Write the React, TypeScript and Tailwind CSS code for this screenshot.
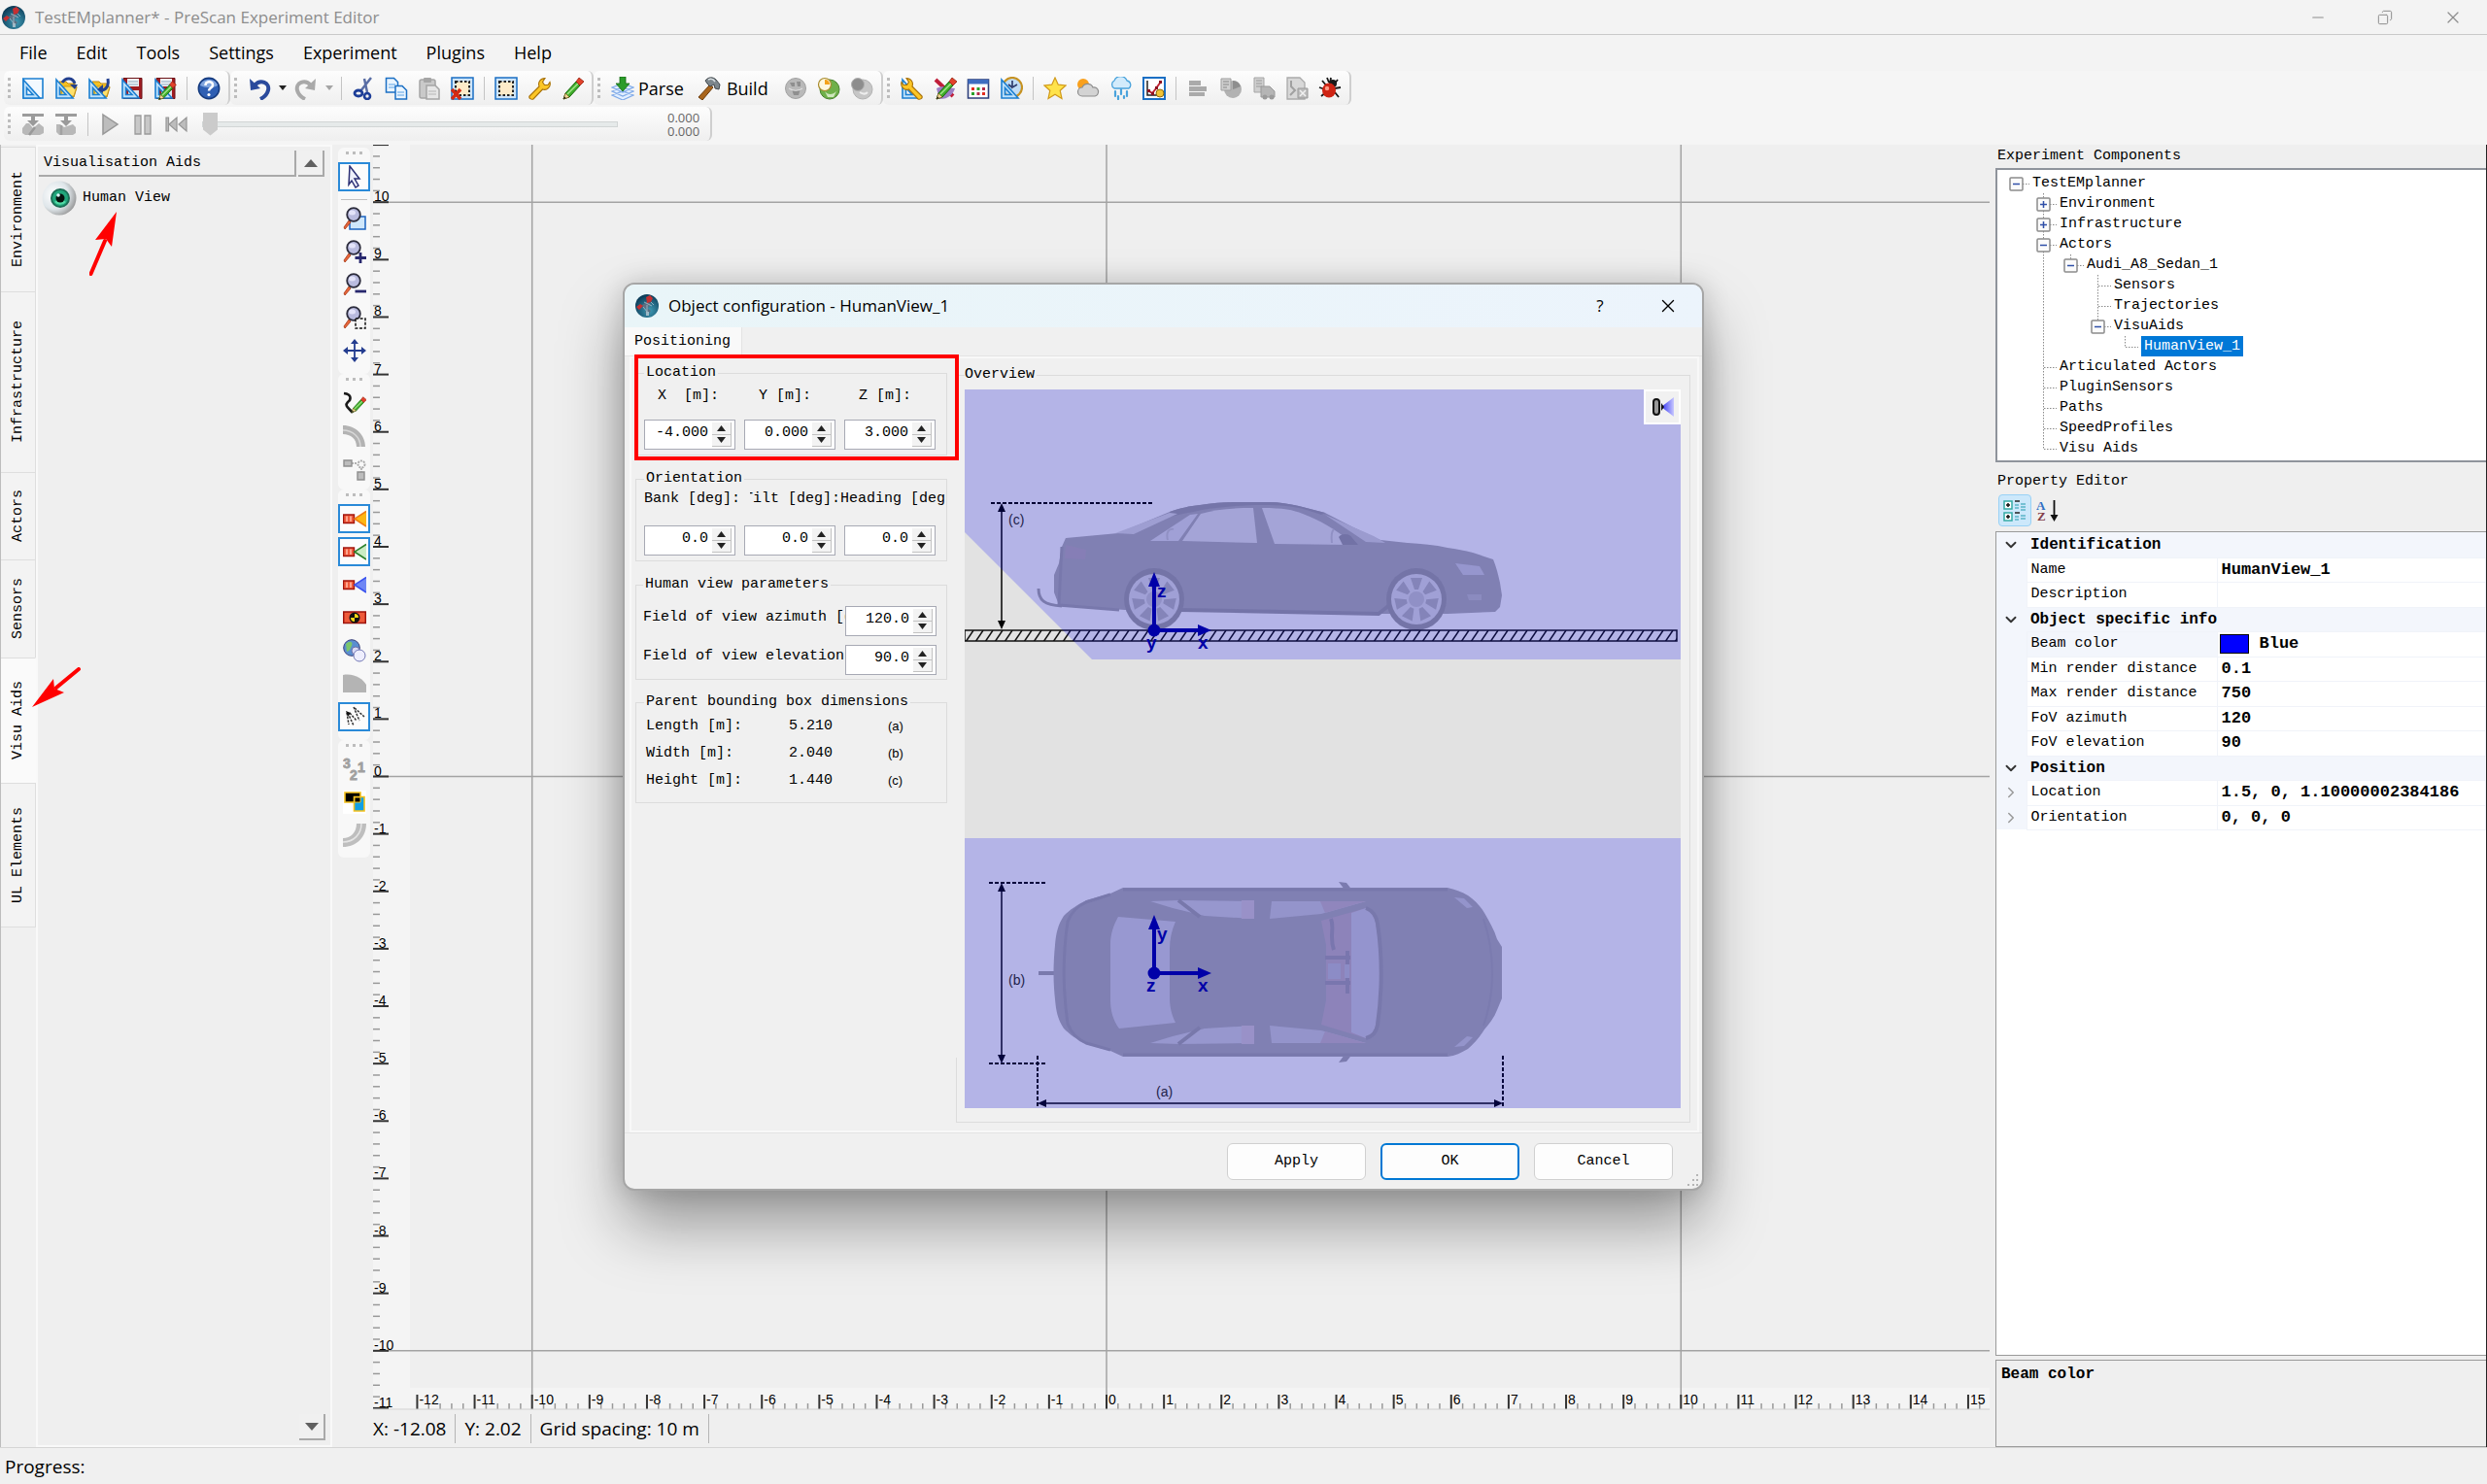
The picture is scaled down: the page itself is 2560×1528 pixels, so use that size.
import React from 'react';
import { ChevronDown, ChevronRight, Copy, Minus, X } from 'lucide-react';

const mono = "font-['Liberation_Mono',monospace] text-[15px] leading-[18px]";

type IconProps = { children: React.ReactNode; size?: string };

function Icon({ children, size = 'h-6 w-6' }: IconProps) {
  return (
    <svg viewBox="0 0 24 24" className={`${size} shrink-0`} fill="none" aria-hidden="true">
      {children}
    </svg>
  );
}

/* ---------- shared icon parts ---------- */

function Logo() {
  return (
    <Icon>
      <defs>
        <radialGradient id="logo" cx="0.6" cy="0.7" r="0.7">
          <stop offset="0" stopColor="#3f9bb5" />
          <stop offset="1" stopColor="#0b3a56" />
        </radialGradient>
      </defs>
      <circle cx="12" cy="12" r="12" fill="url(#logo)" />
      <path d="M7 11l5-3 4 2-3 4-4 1z M12 14l4 3-3 4-3-2z" fill="#5b6f82" />
      <path d="M9 8l8 4M8 13l5 6M14 6l5 5M12 11v10" stroke="#a9c3cf" strokeWidth="0.800" />
      <path d="M11 3l4-2 3 3-2 4-4 1z M1 13l4-3 3 2-4 4z" fill="#c62f31" />
      <path d="M11 18h3v4h-3z" fill="#9fb9c6" />
    </Icon>
  );
}

const SetSquare = () => (
  <path d="M2 3v19h17zM5.500 11.500l6.500 7H5.500z" fill="#bfe2fb" stroke="#1b7fd1" strokeWidth="1.600" fillRule="evenodd" />
);

const Folder = () => (
  <>
    <path d="M5 5h7l2 2h7v4l2 0-3 10H6z" fill="#f5c021" stroke="#c08a10" strokeWidth="1" />
    <path d="M6 20L10 10h13l-3 10z" fill="#ffe06a" stroke="#c08a10" strokeWidth="0.800" />
  </>
);

const Disk = () => (
  <>
    <path d="M3 1.500h19v21H3z" fill="#a01c22" stroke="#6d1216" />
    <path d="M7 2h12v8H7z" fill="#eef3f8" />
    <path d="M8 5h10M8 8h10" stroke="#8fa7bd" />
    <path d="M8 14h11v8H8z" fill="#dfe6ec" />
  </>
);

const Pencil = () => (
  <>
    <path d="M5 17L16 5l4 4L9 21l-6 2z" fill="#3fae2a" stroke="#17670e" strokeWidth="1" />
    <path d="M7 18L18 7" stroke="#a5e58c" strokeWidth="1.500" />
    <path d="M3 23l2-6 4 4z" fill="#f3d59a" stroke="#7b5a1c" strokeWidth="0.700" />
    <path d="M3 23l1-2.500 1.500 1.500z" fill="#111" />
    <path d="M16 5l3-4 5 4-4 4z" fill="#e2412b" stroke="#93220f" strokeWidth="0.800" />
  </>
);

const Wrench = () => (
  <path
    d="M2 20L12 10C10.500 6 13 1.500 18 1.500L15.500 5.500l2 3h3.500l2-3c1.500 5-3 9-7.500 7.500L6 23c-2 1-5-1-4-3z"
    fill="#fcc626"
    stroke="#a8720a"
    strokeWidth="1.100"
  />
);

const Lens = () => (
  <>
    <path d="M1 21l5-7 2 2-6 7z" fill="#e8663a" stroke="#a53312" strokeWidth="0.800" />
    <circle cx="11" cy="8" r="6.800" fill="#b9bbdf" stroke="#2c2c3c" strokeWidth="1.800" />
    <ellipse cx="9.500" cy="6" rx="3.500" ry="2.500" fill="#eef" opacity="0.800" />
  </>
);

const GreyGlobe = () => (
  <>
    <circle cx="12" cy="12" r="10.500" fill="#b9b9b9" stroke="#a2a2a2" />
    <path d="M6 6h5v4H8zM13 5h4v5h-3zM8 13c3 2 6 2 9-1l-2 7h-5z" fill="#8f8f8f" />
    <path d="M5 12c4 3 10 3 14 0" stroke="#dedede" strokeWidth="1.200" />
  </>
);

const Sensor = ({ fan, edge }: { fan: string; edge: string }) => (
  <>
    <path d="M0.500 8h11v8.500h-11z" fill="#ef5b3c" stroke="#a3160e" strokeWidth="1.400" />
    <path d="M3 9.500h2v5.500H3zM7 9.500h2v5.500H7z" fill="#ffa58e" />
    <path d="M12 12.200L24 4.500v15.500z" fill={fan} />
    <path d="M24 4.500L12 12.200 24 20" stroke={edge} strokeWidth="1.600" />
  </>
);

const icons = {
  newFile: <><path d="M2 2h20v20H2z" fill="#f2f9ff" stroke="#1b7fd1" strokeWidth="1.600" /><SetSquare /></>,
  open: <><Folder /><SetSquare /><path d="M8 6c4-6 11-5 13 1" stroke="#23408f" strokeWidth="3" /><path d="M16 8h8l-3 5z" fill="#23408f" /></>,
  openFrom: <><Folder /><SetSquare /><path d="M15 14c6-1 7-7 6-12" stroke="#23408f" strokeWidth="3" /><path d="M10 13l6-5v9z" fill="#23408f" /></>,
  save: <><Disk /><SetSquare /></>,
  saveAs: <><Disk /><SetSquare /><g transform="translate(3 4) scale(.85)"><Pencil /></g></>,
  help: <><circle cx="12" cy="12" r="10.700" fill="#2f5fb3" stroke="#153a7d" strokeWidth="1.500" /><path d="M3 9c2-8 16-8 18 0-5 3-12 3-18 0z" fill="#7fa4dd" /><path d="M8.500 9c0-5 7.500-5 7.500-.5 0 3-4 3-4 6" stroke="#fff" strokeWidth="2.500" /><circle cx="12" cy="18.500" r="1.600" fill="#fff" /></>,
  undo: <><path d="M7 9c6-7 16-3 14 5-1 4-4 7-8 9" stroke="#2a4a9c" strokeWidth="4" /><path d="M2 2l1 12 10-2z" fill="#2a4a9c" /></>,
  redo: <><path d="M17 9C11 2 1 6 3 14c1 4 4 7 8 9" stroke="#a9a9a9" strokeWidth="4" /><path d="M22 2l-1 12-10-2z" fill="#a9a9a9" /></>,
  cut: <><path d="M20 1L9 15M13 2l3 14" stroke="#5a6ea5" strokeWidth="2.500" /><ellipse cx="7" cy="17" rx="4" ry="3" stroke="#1d3e98" strokeWidth="2.800" /><ellipse cx="16" cy="20" rx="3" ry="3" stroke="#1d3e98" strokeWidth="2.600" /></>,
  copy: <><path d="M1.500 1.500h8l4 4V16h-12z" fill="#eaf5ff" stroke="#1b6fc4" strokeWidth="1.500" /><path d="M4 8h7M4 11h7" stroke="#5aa2e4" /><path d="M11 9.500h7l4.500 4.500v9H11z" fill="#eaf5ff" stroke="#1b6fc4" strokeWidth="1.500" /><path d="M13 16h7M13 19h7" stroke="#5aa2e4" /></>,
  paste: <><rect x="2" y="3" width="16" height="19" rx="2" fill="#c9c9c9" stroke="#a5a5a5" strokeWidth="1.500" /><rect x="6" y="1" width="8" height="5" rx="1" fill="#a5a5a5" /><path d="M9 9h9l4 4v10H9z" fill="#e6e6e6" stroke="#a5a5a5" strokeWidth="1.500" /><path d="M11 15h8M11 18h8" stroke="#b5b5b5" /></>,
  erase: <><path d="M1 1h22v22H1z" fill="#cfe5f8" stroke="#1b6fc4" strokeWidth="1.500" /><path d="M5 5h14v14H5z" fill="#fdebc9" stroke="#222" strokeWidth="2" strokeDasharray="2.500 2" /><path d="M1 13l9 10M10 13L1 23" stroke="#d42a14" strokeWidth="3.500" /></>,
  select: <><path d="M1 1h22v22H1z" fill="#cfe5f8" stroke="#1b6fc4" strokeWidth="1.500" /><path d="M5 5h14v14H5z" fill="#fdebc9" stroke="#222" strokeWidth="2" strokeDasharray="2.500 2" /></>,
  wrench: <Wrench />,
  pencil: <Pencil />,
  parse: <><path d="M1 19l11-4 11 4-11 5zM1 15l11-4 11 4-11 5zM1 11l11-4 11 4-11 5z" fill="#e3efff" stroke="#7ea9e8" strokeWidth="1.200" /><path d="M9 0h6v7h4l-7 8-7-8h4z" fill="#2c9c2b" stroke="#12670f" strokeWidth="0.800" /></>,
  build: <><path d="M1 21L13 8l3 3L5 24z" fill="#a9651c" stroke="#6b3c0c" /><path d="M8 4c3-4 8-4 11-1l4 5-1 5-4-1-1-4-4 2-3-3z" fill="#7c868c" stroke="#42494e" /><path d="M11 3c2-1 5-1 7 2" stroke="#dbe1e4" strokeWidth="1.500" /></>,
  globe: <GreyGlobe />,
  run: <><circle cx="13" cy="13" r="10" fill="#6fb04a" stroke="#4a8230" /><path d="M8 15c3 4 8 4 12 0l-3 6h-6z" fill="#cfe6bd" /><circle cx="8" cy="8" r="6.500" fill="#fdf7df" stroke="#a88a2a" strokeWidth="1.200" /><path d="M8 8V3c3 0 5 2 5 5z" fill="#f4a21c" /></>,
  runGrey: <><circle cx="13" cy="13" r="10" fill="#c6c6c6" stroke="#b3b3b3" /><circle cx="8" cy="8" r="6.500" fill="#8d8d8d" stroke="#b0b0b0" /><path d="M10 16c3 2 6 2 8 0" stroke="#eee" strokeWidth="2" /></>,
  settings: <><SetSquare /><g transform="translate(24 0) scale(-1 1)"><Wrench /></g></>,
  paint: <><path d="M2 3l18 17" stroke="#c01f3a" strokeWidth="4" /><path d="M3 12c6-4 14 0 19 0-2 6-6 11-16 11z" fill="#9c7fc4" /><Pencil /></>,
  grid: <><path d="M1.500 3h21v19h-21z" fill="#fff" stroke="#2c3e7a" strokeWidth="1.600" /><path d="M1.500 3h21v4.500h-21z" fill="#3f6cc0" /><path d="M5 11h3v3H5zM16 16h3v3h-3z" fill="#e32d1e" /><path d="M10.500 11h3v3h-3zM5 16h3v3H5z" fill="#2aa02a" /><path d="M16 11h3v3h-3zM10.500 16h3v3h-3z" fill="#b42a48" /></>,
  clock: <><circle cx="13" cy="11" r="10" fill="#bfdcf5" stroke="#c69222" strokeWidth="2.200" /><path d="M13 4v7l5-3M9 8l4 3" stroke="#2f3e6e" strokeWidth="1.700" /><SetSquare /></>,
  star: <path d="M12 1l3.300 7.200 7.700.8-5.800 5.200L19 22.500 12 18.300 5 22.500l1.800-8.300L1 9l7.700-.8z" fill="#ffe34a" stroke="#d19a1a" strokeWidth="1.200" />,
  cloud: <><circle cx="7" cy="8" r="6" fill="#f9a01c" /><path d="M6 20a4.500 4.500 0 010-9 6 6 0 0111 0 4.500 4.500 0 012 9z" fill="#d3d3d3" stroke="#8d8d8d" strokeWidth="1.200" /></>,
  rain: <><path d="M5 12a4.500 4.500 0 010-8 7 7 0 0113 0 4.500 4.500 0 012 8z" fill="#d3ebfb" stroke="#4aa3dc" strokeWidth="1.300" /><path d="M6 15v5M12 13v5M18 15v5M9 20v3M15 20v2" stroke="#4aa3dc" strokeWidth="2.200" strokeLinecap="round" /></>,
  chart: <><path d="M1 1h22v22H1z" fill="#fff" stroke="#1b6fc4" strokeWidth="2" /><path d="M5 4v15h15" stroke="#222" strokeWidth="1.500" /><path d="M6 14l4 3 4-5 5-7" stroke="#c22333" strokeWidth="2" /><path d="M5 13h3v3H5zM9 16h3v3H9zM13 10h3v3h-3zM17 4h3v3h-3z" fill="#8e1220" /><circle cx="18" cy="17" r="4" fill="#f2c335" stroke="#8d6a10" /></>,
  bars: <path d="M3 4h12v5H3zM3 10h18v5H3zM3 16h16v4H3z" fill="#aaa" />,
  pie: <><circle cx="14" cy="13" r="9" fill="#b2b2b2" /><path d="M14 13V4a9 9 0 018 6z" fill="#8e8e8e" /><path d="M2 2h10v12H2z" fill="#cfcfcf" stroke="#9f9f9f" /><path d="M4 5h6M4 8h6M4 11h4" stroke="#888" /></>,
  truck: <><path d="M2 1h10v15H2z" fill="#cfcfcf" stroke="#a5a5a5" /><path d="M4 4h6M4 7h6M4 10h6" stroke="#999" /><path d="M9 10h9l5 5v6H9z" fill="#b5b5b5" stroke="#999" /><circle cx="13" cy="21" r="2.500" fill="#9a9a9a" /><circle cx="20" cy="21" r="2.500" fill="#9a9a9a" /></>,
  report: <><path d="M2 1h13l5 5v17H2z" fill="#d8d8d8" stroke="#aaa" strokeWidth="1.300" /><path d="M6 4v6l4 4-5 5" stroke="#a0a0a0" strokeWidth="2" /><path d="M13 12h10v10H13z" fill="#bcbcbc" stroke="#999" /><path d="M15 14l6 6M21 14l-6 6" stroke="#f1f1f1" strokeWidth="1.500" /></>,
  bug: <><path d="M4 4l5 6M20 3l-4 5M1 11l6 2M23 11l-6 1M3 20l5-4M21 21l-4-5M13 1l-1 6M9 1l2 5" stroke="#1a1a1a" strokeWidth="1.800" /><circle cx="15" cy="7" r="4" fill="#1a1a1a" /><ellipse cx="11" cy="14" rx="7" ry="7.500" fill="#cf2414" /><circle cx="9" cy="12" r="2.200" fill="#ff9a86" /></>,
  car: <><path d="M1 1h22v3H1z" fill="#9c9c9c" /><path d="M1 16l4-5h3l4 5 6-5 5 4v6l-4 2H4l-3-2z" fill="#b8b8b8" /><path d="M8 23l6-8" stroke="#999" strokeWidth="2.500" /><path d="M10 4h4v4h4l-6 6-6-6h4z" fill="#9a9a9a" /></>,
  box: <><path d="M1 1h22v3H1z" fill="#9c9c9c" /><path d="M2 12h4l4 3 9-3 3 3v6l-3 2H5l-3-3z" fill="#b8b8b8" /><path d="M7 13v10" stroke="#a2a2a2" strokeWidth="2.500" /><path d="M10 4h4v4h4l-6 6-6-6h4z" fill="#9a9a9a" /></>,
  play: <path d="M5 2l15 10L5 22z" fill="#bdbdbd" stroke="#979797" strokeWidth="1.500" />,
  pause: <path d="M4 3h6v19H4zM14 3h6v19h-6z" fill="#c8c8c8" stroke="#9b9b9b" strokeWidth="1.300" />,
  rewind: <path d="M2 5h2.500v14H2zM13 5v14L5 12zM23 5v14l-8-7z" fill="#bdbdbd" stroke="#979797" strokeWidth="1.200" />,
  pointer: <path d="M7 1l10 13h-5l4 7-3 2-4-7-3 4z" fill="#eef0fb" stroke="#2b2f74" strokeWidth="1.500" />,
  zoomWindow: <><path d="M7 10h16v13H7z" fill="#cfe7fb" stroke="#1b63c0" strokeWidth="1.500" /><Lens /></>,
  zoomIn: <><Lens /><path d="M18 13v11M12.500 18.500H24" stroke="#28286e" strokeWidth="2.800" /></>,
  zoomOut: <><Lens /><path d="M12.500 19H24" stroke="#28286e" strokeWidth="2.800" /></>,
  zoomFit: <><Lens /><path d="M13 13h10v10H13z" fill="#f6f6f6" stroke="#111" strokeWidth="1.500" strokeDasharray="3 1.600" /></>,
  move: <><path d="M12 3v18M3 12h18" stroke="#233c8f" strokeWidth="1.800" /><path d="M12 0l4 5H8zM12 24l4-5H8zM0 12l5-4v8zM24 12l-5-4v8z" fill="#233c8f" /></>,
  sketch: <><path d="M1 2c9 1 7 7 4 9-4 4 1 6 5 11" stroke="#1a1a1a" strokeWidth="2.600" /><g transform="translate(7 5) scale(.72)"><Pencil /></g></>,
  bend: <><path d="M0 1c13 0 23 10 23 22h-9c0-8-6-13-14-13z" fill="#b3b3b3" /><path d="M0 6c10 0 18 7 18 17" stroke="#d8d8d8" strokeWidth="1.500" /></>,
  nodes: <><path d="M1 3h8v6H1zM15 15h7v8h-7z" fill="#bdbdbd" stroke="#8f8f8f" strokeWidth="1.400" /><path d="M9 6h6M19 11v4" stroke="#999" strokeDasharray="2 1" strokeWidth="1.300" /><circle cx="19" cy="7" r="3.500" stroke="#aaa" strokeWidth="2" strokeDasharray="2 1" /></>,
  sensorOrange: <Sensor fan="#fdb714" edge="#f07c12" />,
  sensorGreen: <Sensor fan="#c9ecc4" edge="#2a7f2a" />,
  sensorBlue: <Sensor fan="#6f87f5" edge="#3a52ee" />,
  crash: <><path d="M0.700 6h22.600v11.500H0.700z" fill="#ee5a3a" stroke="#9c130c" strokeWidth="1.500" /><circle cx="12" cy="12" r="5.500" fill="#111" /><path d="M12 12V8a4 4 0 014 4zM12 12v4a4 4 0 01-4-4z" fill="#f5d813" /></>,
  world: <><circle cx="9" cy="9" r="8.300" fill="#5a8fd0" stroke="#3a3f7a" /><path d="M3 5c4-4 8-2 6 2s-2 5-5 6z" fill="#7cc66a" /><circle cx="13" cy="12" r="4" fill="#d9dbf6" stroke="#6a6fa8" /><circle cx="17" cy="17" r="6" fill="#eeeefe" stroke="#7277b5" /></>,
  terrain: <path d="M0 3c12-2 20 4 24 10v8H0z" fill="#b4b4b4" />,
  lanes: <><path d="M5 8l6 13M4 8l2 12M11 2l6 14M12 3l10 9M7 8l7 8" stroke="#333" strokeWidth="1.500" strokeDasharray="2.500 1.200" /><path d="M3 6l5 2-3 4z" fill="#111" /></>,
  numbers: <g fill="#a0a0a0" stroke="#a0a0a0" strokeWidth="0.800" className="font-['Liberation_Sans',sans-serif] text-[14px] font-bold"><text x="0" y="11">3</text><text x="7" y="23">2</text><text x="15" y="15">1</text></g>,
  layers: <><path d="M0 0h24v24H0z" fill="#fff" /><path d="M2 2h16v10H2z" fill="#000" stroke="#f4c01c" strokeWidth="1.600" /><path d="M11.500 6.500h10.500V21H11.500z" fill="#12a0e4" stroke="#f4c01c" strokeWidth="1.600" /><path d="M12 7h6v5h-6z" fill="#000" stroke="#f4c01c" strokeWidth="1" /></>,
  curve: <><path d="M24 0c0 14-10 24-24 24v-9C8 15 14 9 14 0z" fill="#bebebe" /><path d="M19 0c0 11-8 19-19 19" stroke="#e5e5e5" strokeWidth="1.500" /></>,
};

type IconName = keyof typeof icons;

/* ---------- horizontal toolbars ---------- */

function ToolButton({ name }: { name: IconName }) {
  return (
    <button className="flex h-[34px] w-[34px] items-center justify-center" aria-label={name}>
      <Icon>{icons[name]}</Icon>
    </button>
  );
}

function Grip() {
  return (
    <span className="mr-[5px] flex w-[4px] flex-col gap-[3px]">
      {[0, 1, 2, 3].map((i) => (
        <span key={i} className="h-[3px] w-[3px] bg-[#bdbdbd]" />
      ))}
    </span>
  );
}

const Divider = () => <span className="mx-[5px] h-6 w-px bg-[#c4c4c4]" />;

function Caret({ color }: { color: string }) {
  return (
    <button className="flex h-[34px] w-[14px] items-center justify-center" aria-label="More">
      <svg viewBox="0 0 8 5" className="h-[5px] w-[8px]" aria-hidden="true">
        <path d="M0 0h8L4 5z" fill={color} />
      </svg>
    </button>
  );
}

function ToolGroup({ children }: { children: React.ReactNode }) {
  return (
    <div className="flex h-[35px] items-center rounded-md border-r-2 border-[#cfcfcf] bg-linear-to-b from-[#fdfdfd] to-[#efefef] pr-[3px] pl-[4px]">
      <Grip />
      {children}
    </div>
  );
}

function Toolbars() {
  return (
    <div className="flex flex-col gap-[2px] bg-[#f5f5f5] pb-[4px] pl-[4px] text-[18px]">
      <div className="flex">
        <ToolGroup>
          <ToolButton name="newFile" />
          <ToolButton name="open" />
          <ToolButton name="openFrom" />
          <ToolButton name="save" />
          <ToolButton name="saveAs" />
          <Divider />
          <ToolButton name="help" />
        </ToolGroup>
        <ToolGroup>
          <ToolButton name="undo" />
          <Caret color="#222" />
          <ToolButton name="redo" />
          <Caret color="#a5a5a5" />
          <Divider />
          <ToolButton name="cut" />
          <ToolButton name="copy" />
          <ToolButton name="paste" />
          <ToolButton name="erase" />
          <Divider />
          <ToolButton name="select" />
          <ToolButton name="wrench" />
          <ToolButton name="pencil" />
        </ToolGroup>
        <ToolGroup>
          <button className="flex items-center gap-[4px] px-[5px]">
            <Icon>{icons.parse}</Icon>Parse
          </button>
          <button className="flex items-center gap-[6px] pr-[11px] pl-[9px]">
            <Icon>{icons.build}</Icon>Build
          </button>
          <ToolButton name="globe" />
          <ToolButton name="run" />
          <ToolButton name="runGrey" />
        </ToolGroup>
        <ToolGroup>
          <ToolButton name="settings" />
          <ToolButton name="paint" />
          <ToolButton name="grid" />
          <ToolButton name="clock" />
          <Divider />
          <ToolButton name="star" />
          <ToolButton name="cloud" />
          <ToolButton name="rain" />
          <ToolButton name="chart" />
          <Divider />
          <ToolButton name="bars" />
          <ToolButton name="pie" />
          <ToolButton name="truck" />
          <ToolButton name="report" />
          <ToolButton name="bug" />
        </ToolGroup>
      </div>
      <div className="flex">
        <ToolGroup>
          <ToolButton name="car" />
          <ToolButton name="box" />
          <Divider />
          <ToolButton name="play" />
          <ToolButton name="pause" />
          <ToolButton name="rewind" />
          <input
            type="range"
            defaultValue={0}
            aria-label="Simulation time"
            className="ml-[10px] h-6 w-[428px] appearance-none bg-transparent [&::-webkit-slider-runnable-track]:h-[6px] [&::-webkit-slider-runnable-track]:border [&::-webkit-slider-runnable-track]:border-[#d2d6d6] [&::-webkit-slider-runnable-track]:bg-[#e6eaea] [&::-webkit-slider-thumb]:-mt-[10px] [&::-webkit-slider-thumb]:h-6 [&::-webkit-slider-thumb]:w-[15px] [&::-webkit-slider-thumb]:appearance-none [&::-webkit-slider-thumb]:bg-[#cbcbcb] [&::-webkit-slider-thumb]:[clip-path:polygon(0_0,100%_0,100%_75%,50%_100%,0_75%)]"
          />
          <span className="mr-[8px] ml-[51px] flex flex-col text-[13px] leading-[14px] text-[#666]">
            <span>0.000</span>
            <span>0.000</span>
          </span>
        </ToolGroup>
      </div>
    </div>
  );
}

/* ---------- left side ---------- */

const sideTabs = [
  { label: 'Environment', cls: 'h-[149px]' },
  { label: 'Infrastructure', cls: 'h-[186px]' },
  { label: 'Actors', cls: 'h-[90px]' },
  { label: 'Sensors', cls: 'h-[101px]' },
  { label: 'Visu Aids', cls: 'h-[129px]' },
  { label: 'UL Elements', cls: 'h-[148px]' },
];

function SideTabs() {
  return (
    <div role="tablist" aria-orientation="vertical" className={`flex w-[37px] shrink-0 flex-col border-l border-[#bdbdbd] pt-[2px] ${mono}`}>
      {sideTabs.map(({ label, cls }) => (
        <button
          key={label}
          role="tab"
          aria-selected={label === 'Visu Aids'}
          className={`flex items-center justify-center border-t border-r border-[#dedede] ${cls} ${
            label === 'Visu Aids' ? 'border-r-[#fafafa] bg-[#fafafa]' : 'bg-[#f3f3f3]'
          }`}
        >
          <span className="rotate-180 [writing-mode:vertical-rl]">{label}</span>
        </button>
      ))}
      <div className="border-t border-[#dedede]" />
    </div>
  );
}

function ScrollButton({ down }: { down?: boolean }) {
  return (
    <button
      aria-label={down ? 'Scroll down' : 'Scroll up'}
      className="flex h-[27px] w-[27px] items-center justify-center border-r-2 border-b-2 border-[#a9a9a9] bg-[#f0f0f0]"
    >
      <svg viewBox="0 0 14 8" className={`h-[8px] w-[14px] ${down ? 'rotate-180' : ''}`} aria-hidden="true">
        <path d="M0 8L7 0l7 8z" fill="#606060" />
      </svg>
    </button>
  );
}

function Library() {
  return (
    <div className={`flex w-[305px] shrink-0 flex-col justify-between border-2 border-[#f9f9f9] bg-[#efefef] pb-[5px] ${mono}`}>
      <div>
        <div className="flex gap-[2px] pt-[4px] pl-[1px]">
          <button className="h-[27px] w-[265px] border-r-2 border-b-2 border-[#a9a9a9] bg-[#f0f0f0] pl-[5px] text-left">Visualisation Aids</button>
          <ScrollButton />
        </div>
        <button className="mt-[4px] ml-[4px] flex items-center gap-[6px]">
          <svg viewBox="0 0 36 36" className="h-9 w-9" aria-hidden="true">
            <defs>
              <radialGradient id="ball" cx="0.35" cy="0.4" r="0.7">
                <stop offset="0" stopColor="#ffffff" />
                <stop offset="0.6" stopColor="#dfe6ea" />
                <stop offset="1" stopColor="#929292" />
              </radialGradient>
            </defs>
            <circle cx="18" cy="18" r="17.500" fill="url(#ball)" />
            <circle cx="19" cy="18" r="10" fill="#1d6f57" />
            <circle cx="19" cy="18" r="8" fill="#22a77c" />
            <path d="M13 22a8 8 0 0012 0l-6-4z" fill="#52dba6" />
            <circle cx="19" cy="18" r="4.500" fill="#06120e" />
            <circle cx="17" cy="15" r="1.800" fill="#dff" />
          </svg>
          Human View
        </button>
      </div>
      <div className="flex justify-end pr-[5px]">
        <ScrollButton down />
      </div>
    </div>
  );
}

type StripItem = IconName | 'rule';

const strips: { cls: string; items: StripItem[] }[] = [
  { cls: 'h-[233px]', items: ['pointer', 'rule', 'zoomWindow', 'zoomIn', 'zoomOut', 'zoomFit', 'move'] },
  { cls: 'h-[119px]', items: ['sketch', 'bend', 'nodes'] },
  { cls: 'h-[258px]', items: ['sensorOrange', 'sensorGreen', 'sensorBlue', 'crash', 'world', 'terrain', 'lanes'] },
  { cls: 'h-[121px]', items: ['numbers', 'layers', 'curve'] },
];

const pressed: StripItem[] = ['pointer', 'sensorOrange', 'sensorGreen', 'lanes'];

function CanvasTools() {
  return (
    <div className="w-[42px] shrink-0 bg-[#efefef] pt-[3px] pl-[6px]">
      {strips.map(({ cls, items }) => (
        <div key={items[0]} className={`flex w-[33px] flex-col gap-[4px] rounded-md bg-[#f8f8f8] ${cls}`}>
          <span className="flex h-[11px] items-center justify-center gap-[4px]">
            <span className="h-[3px] w-[3px] bg-[#bdbdbd]" />
            <span className="h-[3px] w-[3px] bg-[#bdbdbd]" />
            <span className="h-[3px] w-[3px] bg-[#bdbdbd]" />
          </span>
          {items.map((item) =>
            item === 'rule' ? (
              <span key={item} className="mx-[3px] mt-[4px] h-px shrink-0 bg-[#c0c0c0]" />
            ) : (
              <button
                key={item}
                aria-label={item}
                className={`flex h-[30px] shrink-0 items-center justify-center ${pressed.includes(item) ? 'border-2 border-[#2a8ad8] bg-[#fcfcfc]' : ''}`}
              >
                <Icon>{icons[item]}</Icon>
              </button>
            ),
          )}
        </div>
      ))}
    </div>
  );
}

/* ---------- drawing canvas ---------- */

const UNIT = 59.13;
const ORIGIN = { x: 755, y: 650.5 };

function Rulers() {
  const rows = Array.from({ length: 23 }, (_, i) => 11 - i);
  const cols = Array.from({ length: 28 }, (_, i) => i - 12);
  const sub = [0.2, 0.4, 0.6, 0.8];
  const px = (v: number) => ORIGIN.x + v * UNIT;
  const py = (v: number) => ORIGIN.y - v * UNIT;
  return (
    <svg className="min-h-0 w-full flex-1 bg-[#efefef] font-['Liberation_Sans',sans-serif] text-[14px]" aria-label="Experiment canvas">
      <rect width="38" height="100%" fill="#f4f4f4" />
      <rect y="1280" width="100%" height="22" fill="#f4f4f4" />
      {[-10, 0, 10].map((v) => (
        <g key={v} stroke="#a3a3a3" strokeWidth="1.500">
          <line x1={px(v)} x2={px(v)} y1="0" y2="1290" />
          <line x1="0" x2="100%" y1={py(v)} y2={py(v)} />
        </g>
      ))}
      {rows.map((v) => (
        <g key={v}>
          <line x1="0" x2="16" y1={py(v)} y2={py(v)} stroke="#333" strokeWidth="2" />
          {sub.map((s) => (
            <line key={s} x1="0" x2="7" y1={py(v - s)} y2={py(v - s)} stroke="#999" strokeWidth="1.500" />
          ))}
          <text x="1" y={py(v) - 1}>{v}</text>
        </g>
      ))}
      {cols.map((v) => (
        <g key={v}>
          <line x1={px(v)} x2={px(v)} y1="1287" y2="1302" stroke="#333" strokeWidth="2" />
          {sub.map((s) => (
            <line key={s} x1={px(v + s)} x2={px(v + s)} y1="1296" y2="1302" stroke="#999" strokeWidth="1.500" />
          ))}
          <text x={px(v) + 2} y="1297">{v}</text>
        </g>
      ))}
      <line x1="0" x2="100%" y1="1302" y2="1302" stroke="#d0d0d0" />
    </svg>
  );
}

function Workspace() {
  return (
    <div className="flex min-w-0 flex-1 flex-col bg-[#efefef] pr-[6px]">
      <div className="flex min-h-0 flex-1">
        <CanvasTools />
        <div className="flex min-w-0 flex-1 flex-col">
          <Rulers />
        </div>
      </div>
      <div className="flex h-[38px] shrink-0 items-center pl-[42px] text-[19px]">
        <span className="border-r border-[#b5b5b5] py-[3px] pr-[9px]">X: -12.08</span>
        <span className="border-r border-[#b5b5b5] px-[9px] py-[3px]">Y: 2.02</span>
        <span className="border-r border-[#b5b5b5] px-[9px] py-[3px]">Grid spacing: 10 m</span>
      </div>
    </div>
  );
}

/* ---------- right side ---------- */

// One letter per indent cell: ' ' empty, '|' passing line, 't' tee, 'l' corner,
// '+' and '-' boxes on a passing line, '_' open box that ends its line.
const tree = [
  { cells: '-', label: 'TestEMplanner' },
  { cells: ' +', label: 'Environment' },
  { cells: ' +', label: 'Infrastructure' },
  { cells: ' -', label: 'Actors' },
  { cells: ' |_', label: 'Audi_A8_Sedan_1' },
  { cells: ' | t', label: 'Sensors' },
  { cells: ' | t', label: 'Trajectories' },
  { cells: ' | _', label: 'VisuAids' },
  { cells: ' |  l', label: 'HumanView_1', selected: true },
  { cells: ' t', label: 'Articulated Actors' },
  { cells: ' t', label: 'PluginSensors' },
  { cells: ' t', label: 'Paths' },
  { cells: ' t', label: 'SpeedProfiles' },
  { cells: ' l', label: 'Visu Aids' },
];

function TreeCell({ kind, root }: { kind: string; root: boolean }) {
  const boxed = '+-_'.includes(kind);
  return (
    <svg viewBox="0 0 28 21" className="h-[21px] w-7 shrink-0" fill="none" aria-hidden="true">
      <g stroke="#8a8a8a" strokeDasharray="1.500 1.500">
        {kind !== ' ' && !root && <path d={kind === 'l' || kind === '_' ? 'M11.500 0V11' : 'M11.500 0V21'} />}
        {kind !== ' ' && kind !== '|' && <path d="M12 11.500H25" />}
      </g>
      {boxed && (
        <>
          <rect x="5" y="5" width="13" height="13" rx="1" fill="#fbfbfb" stroke="#8c8c8c" strokeWidth="1.500" />
          <path d={kind === '+' ? 'M8 11.500h7M11.500 8v7' : 'M8 11.500h7'} stroke="#3050a8" strokeWidth="1.500" />
        </>
      )}
    </svg>
  );
}

const properties: { head?: string; name?: string; value?: string; swatch?: boolean; more?: boolean }[] = [
  { head: 'Identification' },
  { name: 'Name', value: 'HumanView_1' },
  { name: 'Description', value: '' },
  { head: 'Object specific info' },
  { name: 'Beam color', value: 'Blue', swatch: true },
  { name: 'Min render distance', value: '0.1' },
  { name: 'Max render distance', value: '750' },
  { name: 'FoV azimuth', value: '120' },
  { name: 'FoV elevation', value: '90' },
  { head: 'Position' },
  { name: 'Location', value: '1.5, 0, 1.10000002384186', more: true },
  { name: 'Orientation', value: '0, 0, 0', more: true },
];

function PropertyGrid() {
  return (
    <table className="w-full table-fixed border-collapse">
      <colgroup>
        <col className="w-[31px]" />
        <col className="w-[196px]" />
        <col />
      </colgroup>
      <tbody>
        {properties.map((p) => (
          <tr key={p.head ?? p.name} className="odd:h-[26px] even:h-[25px]">
            <td className="bg-[#f3f6fc] p-0 pl-[6px]">
              {p.head && <ChevronDown size={18} strokeWidth={2.5} color="#333" />}
              {p.more && <ChevronRight size={18} strokeWidth={2} color="#999" />}
            </td>
            {p.head ? (
              <th colSpan={2} className="bg-[#f3f6fc] p-0 pl-[4px] text-left text-[16px] font-bold">
                {p.head}
              </th>
            ) : (
              <>
                <td className={`border border-[#f0f3f9] p-0 pl-[4px] ${p.swatch ? 'bg-[#f3f6fc]' : ''}`}>{p.name}</td>
                <td className="border border-[#f0f3f9] p-0 pl-[4px] text-[17px] font-bold whitespace-nowrap">
                  {p.swatch && <span className="mr-[11px] -ml-[2px] inline-block h-[20px] w-[30px] border border-black bg-[#0000ff] align-middle" />}
                  {p.value}
                </td>
              </>
            )}
          </tr>
        ))}
      </tbody>
    </table>
  );
}

function Inspector() {
  return (
    <aside className={`flex w-[506px] shrink-0 flex-col border-r border-[#222] bg-[#efefef] ${mono}`}>
      <h2 className="pt-[3px] pb-[3px] pl-[2px]">Experiment Components</h2>
      <div role="tree" className="h-[303px] border-2 border-r-0 border-[#8f949c] bg-white pt-[3px] pl-[8px]">
        {tree.map(({ cells, label, selected }) => (
          <div key={cells + label} role="treeitem" aria-selected={!!selected} className="flex h-[21px] items-center">
            {cells.split('').map((kind, i) => (
              <TreeCell key={i} kind={kind} root={cells.length === 1} />
            ))}
            <span className={selected ? 'bg-[#0078d7] px-[3px] leading-[21px] text-white' : ''}>{label}</span>
          </div>
        ))}
      </div>
      <h2 className="pt-[11px] pl-[2px]">Property Editor</h2>
      <div className="flex items-center gap-[5px] pt-[4px] pb-[5px] pl-[3px]">
        <button aria-label="Categorized" className="flex h-[33px] w-[34px] items-center justify-center rounded-sm border border-[#99d1f5] bg-[#cce8fb]">
          <Icon>
            <path d="M1 2h8v8H1zM1 14h8v8H1z" fill="#fff" stroke="#35aaa6" strokeWidth="1.500" />
            <path d="M3 6h4M5 4v4M3 18h4M5 16v4" stroke="#111" strokeWidth="1.500" />
            <path d="M12 2h5M12 14h5" stroke="#222" strokeWidth="1.500" />
            <path d="M12 6h4M12 9h4M12 18h4M12 21h4M18 5h5M18 8h5M18 11h5M18 17h5M18 20h5" stroke="#5ab4c8" strokeWidth="1.500" />
          </Icon>
        </button>
        <button aria-label="Alphabetical">
          <Icon>
            <g className="font-['Liberation_Serif',serif] text-[13px] font-bold">
              <text x="0" y="11" fill="#2f6fc4">A</text>
              <text x="1" y="22" fill="#84404a">Z</text>
            </g>
            <path d="M18.500 1v17" stroke="#111" strokeWidth="1.800" />
            <path d="M14.500 16h8l-4 7z" fill="#111" />
          </Icon>
        </button>
      </div>
      <div className="min-h-0 flex-1 border border-r-0 border-[#9a9a9a] bg-white">
        <PropertyGrid />
      </div>
      <div className="mt-[4px] h-[90px] border border-r-0 border-[#9a9a9a] p-[5px] text-[16px] font-bold">Beam color</div>
    </aside>
  );
}

/* ---------- dialog ---------- */

function Spin({ label, value }: { label: string; value: string }) {
  return (
    <div className="flex h-[31px] w-[94px] shrink-0 border border-[#a7a9b4] bg-white py-[2px] pr-[3px]">
      <input aria-label={label} defaultValue={value} className="min-w-0 flex-1 bg-transparent pr-[4px] pb-[4px] text-right outline-none" />
      <div className="flex w-[20px] flex-col">
        {['Increase', 'Decrease'].map((dir) => (
          <button key={dir} aria-label={`${dir} ${label}`} className="flex flex-1 items-center justify-center border-r border-b border-[#c2c2c2] bg-[#f3f3f3]">
            <svg viewBox="0 0 9 6" className={`h-[6px] w-[9px] ${dir === 'Decrease' ? 'rotate-180' : ''}`} aria-hidden="true">
              <path d="M0 6l4.500-6L9 6z" fill="#222" />
            </svg>
          </button>
        ))}
      </div>
    </div>
  );
}

function Group({ title, className, children }: { title: string; className: string; children: React.ReactNode }) {
  return (
    <fieldset className={`min-w-0 border border-[#dcdcdc] ${className}`}>
      <legend className="px-[2px]">{title}</legend>
      {children}
    </fieldset>
  );
}

const wheelSpokes = [0, 51, 103, 154, 206, 257, 309];

function Wheel({ cx }: { cx: number }) {
  return (
    <g>
      <ellipse cx={cx} cy="216" rx="31" ry="32" fill="#929292" />
      <circle cx={cx} cy="216" r="26" fill="#c9c9cc" />
      {wheelSpokes.map((a) => (
        <path key={a} d={`M${cx - 2} 206l-4-12h12l-4 12z`} fill="#a5a5a8" transform={`rotate(${a} ${cx} 216)`} />
      ))}
      <circle cx={cx} cy="216" r="8" fill="#b5b5b8" />
    </g>
  );
}

function TopWindows() {
  return (
    <g>
      <path d="M191 527l30-1 77 1v18l-51-3-33-8z" fill="#bdbdc2" />
      <path d="M285 526h13v19h-13z" fill="#c0b6bb" />
      <path d="M316 527h97l-46 13-53 5z" fill="#b9b9be" />
      <path d="M366 527h47l-42 12z" fill="#b5a8ad" />
      <path d="M220 526l22 17" stroke="#969696" strokeWidth="4" />
    </g>
  );
}

function Axes({ y, up, out }: { y: number; up: string; out: string }) {
  return (
    <g fill="#0000a8" stroke="#0000a8">
      <path d={`M195 ${y}V${y - 48}M195 ${y}H242`} strokeWidth="4" />
      <path d={`M195 ${y - 60}l6 15h-12zM254 ${y}l-14-6v12z`} stroke="none" />
      <circle cx="195" cy={y} r="6.500" stroke="none" />
      <g stroke="none" className="font-['Liberation_Sans',sans-serif] text-[19px] font-bold">
        <text x="198" y={y - 34}>{up}</text>
        <text x="187" y={y + 19}>{out}</text>
        <text x="240" y={y + 19}>x</text>
      </g>
    </g>
  );
}

function Overview() {
  return (
    <svg viewBox="0 0 737 740" className="block w-full" fill="none" role="img" aria-label="Overview of the field of view">
      <defs>
        <pattern id="hatch" width="10" height="12" patternUnits="userSpaceOnUse" y="248">
          <path d="M1 12L9 0" stroke="#111" strokeWidth="1.500" />
        </pattern>
        <linearGradient id="beam">
          <stop offset="0" stopColor="#3030f0" />
          <stop offset="1" stopColor="#c8c8ff" />
        </linearGradient>
      </defs>
      <rect width="737" height="740" fill="#e2e2e2" />

      {/* side view */}
      <path d="M76 205c0 12 6 17 24 18" stroke="#999" strokeWidth="3" />
      <path
        d="M104 153l54-5 5-2 48-20c12-4 20-6 31-7 12-2 24-3 36-3h35c11 0 21 2 31 4l27 7 29 15 28 13 28 3c14 1 28 2 41 5 9 1 18 3 26 5l21 7c3 7 5 15 7 24l2 13-2 12-5 5-49 2h-71l-82-1-122-3h-57l-68-5-5-13v-18l5-12 3-17z"
        fill="#a0a0a1"
      />
      <path d="M211 126c12-4 20-6 31-7 12-2 24-3 36-3h35c11 0 21 2 31 4l27 7-4 2c-14-5-24-8-36-9-20-2-50-1-72 2-18 2-32 6-48 9z" fill="#939394" />
      <path d="M155 148l56-21 8 1-45 21z" fill="#c6c6c7" />
      <path d="M371 129l50 22 12 7-20-1z" fill="#c2c2c4" />
      <path d="M191 156l41-27 8-1-20 28z" fill="#c9c9cc" />
      <path d="M224 156l19-28c16-5 34-6 54-6l4 36z" fill="#cecece" />
      <path d="M319 159l-13-37c22 0 32 2 42 6 16 6 34 16 48 28l1 4z" fill="#cecece" />
      <path d="M209 155c-2-8 1-12 6-11M378 158c-1-8 0-12 2-14" stroke="#b5b5b6" strokeWidth="2" />
      <path d="M385 152c4-5 12-3 14 1l6 7h-16z" fill="#8f8f90" />
      <path d="M104 160l21 5-1 10-21-1z" fill="#a89ea4" />
      <path d="M505 179l25 3 5 9h-22z" fill="#bcbcc2" />
      <path d="M517 211h15v6h-13z" fill="#aeaeb0" />
      <path d="M100 162l-3 60 62 5" stroke="#979798" strokeWidth="3" />
      <path d="M222 227l204 4 10-8" stroke="#929293" strokeWidth="4" />
      <Wheel cx={195} />
      <Wheel cx={465} />
      <rect y="248" width="733" height="11" fill="url(#hatch)" stroke="#111" strokeWidth="1.500" />
      <path d="M27 117h167" stroke="#000" strokeWidth="2" strokeDasharray="4 2" />
      <path d="M38 120v124" stroke="#000" strokeWidth="1.500" />
      <path d="M38 117l4 9h-8zM38 247l4-9h-8z" fill="#000" />

      {/* top view */}
      <path d="M76 601h18" stroke="#999" strokeWidth="4" />
      <path d="M385 507l8 1 7 9-3 6zM385 693l8-1 7-9-3-6z" fill="#9a9a9b" />
      <path
        d="M163 513h334c8 2 14 4 21 8 7 5 13 11 17 18 5 9 10 17 13 27l5 8v53l-5 12c-3 8-8 14-13 20-5 8-10 14-17 20-7 4-13 7-21 8H163l-13-6-25-7c-10-5-17-10-23-16-6-9-8-18-9-30-2-18-2-36 0-56 1-12 3-21 9-30 6-6 13-11 23-16l25-7z"
        fill="#a0a0a1"
      />
      <path d="M163 515h334M163 685h334M150 520l-25 8c-9 4-16 12-19 20-5 34-5 70 0 105 3 8 10 16 19 20l25 7" stroke="#979798" strokeWidth="3" />
      <TopWindows />
      <g transform="translate(0 1200) scale(1 -1)">
        <TopWindows />
      </g>
      <path d="M158 543l59 5c-4 9-6 18-6 28v50c0 10 2 18 6 26l-58 6c-6-8-9-18-9-29v-57c0-11 3-20 8-29z" fill="#bfbfc6" />
      <path d="M367 547l46-13c6 4 8 9 10 15 3 18 5 34 5 52s-2 38-5 55c-2 6-4 9-10 12l-46-14 5-25v-57z" fill="#b1a4a9" />
      <path d="M398 539l15-5c6 4 8 9 10 15 3 18 5 34 5 52s-2 38-5 55c-2 6-4 9-10 12l-15-6z" fill="#babac2" />
      <path d="M371 585h26M371 611h26M394 578v44M377 545c4 10-2 18 3 32" stroke="#98949a" strokeWidth="4" />
      <path d="M374 591h13v16h-13zM391 592h5v14h-5z" fill="#b0b0b8" />
      <path d="M413 534c8 3 11 9 12 16 5 34 5 68 0 104-1 7-4 12-12 14" stroke="#979798" strokeWidth="4" />
      <path d="M504 523l10 1 9 9-6 1zM504 677l10-1 9-9-6-1z" fill="#b9b9be" />
      <path d="M534 545c12 36 12 76 0 110" stroke="#9a9a9b" strokeWidth="2" />

      {/* field of view */}
      <path d="M0 0h737v278H131L0 147zM0 462h737v278H0z" fill="#0000ff" fillOpacity="0.200" />

      <g stroke="#04043c">
        <path d="M25 508h60M25 694h60M75 686v52M554 686v52" strokeWidth="2" strokeDasharray="4 2" />
        <path d="M38 512v178M80 735h470" strokeWidth="1.500" />
      </g>
      <path d="M38 508l4 9h-8zM38 694l4-9h-8zM75 735l9-4v8zM554 735l-9-4v8z" fill="#04043c" />
      <g fill="#22224a" className="font-['Liberation_Sans',sans-serif] text-[14px]">
        <text x="45" y="139">(c)</text>
        <text x="45" y="613">(b)</text>
        <text x="197" y="728">(a)</text>
      </g>
      <Axes y={248} up="z" out="y" />
      <Axes y={601} up="y" out="z" />

      {/* view switch */}
      <rect x="700" y="1" width="36" height="34" fill="#f1f1f1" stroke="#fff" strokeWidth="2" />
      <rect x="709" y="10" width="6" height="16" rx="3" fill="#999" stroke="#111" strokeWidth="2" />
      <path d="M717 18l13-10v20z" fill="url(#beam)" />
      <path d="M717 14v8l3-4z" fill="#111" />
    </svg>
  );
}

const dialogButton = 'h-[38px] w-[143px] rounded-md border bg-[#fdfdfd]';

function ObjectDialog() {
  return (
    <div
      role="dialog"
      aria-labelledby="dialog-title"
      className={`absolute top-[291px] left-[641px] w-[1113px] overflow-hidden rounded-xl border-2 border-[#a6a6a6] bg-[#f0f0f0] shadow-[0_36px_64px_rgba(0,0,0,0.36),0_0_28px_rgba(0,0,0,0.16)] ${mono}`}
    >
      <header className="flex h-[44px] items-center gap-[10px] bg-linear-to-r from-[#e9f5f8] to-[#ecf4fc] pl-[11px] font-['Open_Sans','Noto_Sans',sans-serif] text-[17px]">
        <Logo />
        <h1 id="dialog-title" className="flex-1">Object configuration - HumanView_1</h1>
        <div className="flex items-center">
          <button aria-label="Help" className="w-[70px]">?</button>
          <button aria-label="Close" className="flex w-[70px] justify-center">
            <X size={22} strokeWidth={1.5} />
          </button>
        </div>
      </header>
      <div role="tablist" className="flex h-[30px] border-b border-[#e4e4e4]">
        <button role="tab" aria-selected="true" className="w-[121px] border-r border-[#e4e4e4] bg-[#f9f9f9] pl-[10px] text-left">
          Positioning
        </button>
      </div>
      <div className="mr-[3px] ml-[5px] flex gap-[9px] border-2 border-[#f8f8f8] pr-[7px] pb-[8px] pl-[4px]">
        <div className="w-[321px] shrink-0 pt-[6px]">
          <Group title="Location" className="pt-[6px] pb-[5px] pl-[8px]">
            <div className="flex whitespace-pre">
              <span className="w-[104px] pl-[14px]">X  [m]:</span>
              <span className="w-[103px] pl-[14px]">Y [m]:</span>
              <span className="pl-[14px]">Z [m]:</span>
            </div>
            <div className="mt-[15px] flex gap-[9px]">
              <Spin label="X" value="-4.000" />
              <Spin label="Y" value="0.000" />
              <Spin label="Z" value="3.000" />
            </div>
          </Group>
          <Group title="Orientation" className="mt-[15px] pt-[3px] pb-[5px] pl-[8px]">
            <div className="flex whitespace-nowrap">
              <span className="w-[109px] shrink-0">Bank [deg]:</span>
              <span className="flex w-[93px] shrink-0 justify-end overflow-hidden">
                <span>Tilt [deg]:</span>
              </span>
              <span className="min-w-0 flex-1 overflow-hidden">Heading [deg]:</span>
            </div>
            <div className="mt-[18px] flex gap-[9px]">
              <Spin label="Bank" value="0.0" />
              <Spin label="Tilt" value="0.0" />
              <Spin label="Heading" value="0.0" />
            </div>
          </Group>
          <Group title="Human view parameters" className="mt-[15px] pt-[13px] pb-[4px] pl-[7px] whitespace-nowrap">
            <div className="flex">
              <span className="w-[208px] overflow-hidden pt-[3px]">Field of view azimuth [deg]:</span>
              <Spin label="Field of view azimuth" value="120.0" />
            </div>
            <div className="mt-[9px] flex">
              <span className="w-[208px] overflow-hidden pt-[3px]">Field of view elevation [deg]:</span>
              <Spin label="Field of view elevation" value="90.0" />
            </div>
          </Group>
          <Group title="Parent bounding box dimensions" className="mt-[14px] pt-[2px] pb-[8px] pl-[8px]">
            {[
              ['Length [m]:', '5.210', '(a)'],
              ['Width [m]:', '2.040', '(b)'],
              ['Height [m]:', '1.440', '(c)'],
            ].map(([name, value, mark]) => (
              <div key={name} className="flex h-[28px] items-center pl-[2px]">
                <span className="w-[147px]">{name}</span>
                <span className="w-[102px]">{value}</span>
                <span className="font-['Liberation_Sans',sans-serif] text-[13px]">{mark}</span>
              </div>
            ))}
          </Group>
        </div>
        <fieldset className="relative mt-[8px] min-w-0 flex-1 border border-l-0 border-[#dcdcdc] px-[9px] pt-[6px] pb-[14px] before:absolute before:bottom-0 before:left-0 before:h-[66px] before:w-px before:bg-[#dcdcdc]">
          <legend className="pr-[2px]">Overview</legend>
          <Overview />
        </fieldset>
      </div>
      <footer className="flex justify-end gap-[15px] border-t border-[#e4e4e4] pt-[10px] pr-[30px] pb-[9px]">
        <button className={`${dialogButton} border-[#d0d0d0]`}>Apply</button>
        <button className={`${dialogButton} border-2 border-[#0078d4]`}>OK</button>
        <button className={`${dialogButton} border-[#d0d0d0]`}>Cancel</button>
      </footer>
      <svg viewBox="0 0 12 12" className="absolute right-[3px] bottom-[3px] h-3 w-3" aria-hidden="true">
        <path d="M9 0h2v2H9zM9 5h2v2H9zM9 10h2v2H9zM5 5h2v2H5zM5 10h2v2H5zM0 10h2v2H0z" fill="#b5b5b5" />
      </svg>
    </div>
  );
}

function Annotations() {
  return (
    <>
      <div className="pointer-events-none absolute top-[365px] left-[653px] h-[109px] w-[334px] border-4 border-[#ff0000]" />
      <svg viewBox="0 0 30 70" className="pointer-events-none absolute top-[216px] left-[92px] h-[70px] w-[30px]" aria-hidden="true">
        <path d="M1.500 66L16 32" stroke="#ff0000" strokeWidth="4" strokeLinecap="round" />
        <path d="M28 2L6 31l11-1 6 8z" fill="#ff0000" />
      </svg>
      <svg viewBox="0 0 52 44" className="pointer-events-none absolute top-[687px] left-[32px] h-[44px] w-[52px]" aria-hidden="true">
        <path d="M49 2L26 21" stroke="#ff0000" strokeWidth="4" strokeLinecap="round" />
        <path d="M1 41L23 12l1 10 10 4z" fill="#ff0000" />
      </svg>
    </>
  );
}

/* ---------- page ---------- */

const menu = ['File', 'Edit', 'Tools', 'Settings', 'Experiment', 'Plugins', 'Help'];

export default function App() {
  return (
    <div className="relative flex h-screen flex-col overflow-hidden bg-[#f0f0f0] font-['Open_Sans','Noto_Sans',sans-serif] text-[17px] leading-[24px] text-black">
      <header className="flex h-[36px] shrink-0 items-center gap-[10px] border-b border-[#c9c9c9] bg-[#f3f3f3] pl-[2px] text-[#8d8d8d]">
        <Logo />
        <h1 className="flex-1">TestEMplanner* - PreScan Experiment Editor</h1>
        <div className="flex items-center">
          <button aria-label="Minimize" className="flex w-[69px] justify-center"><Minus size={18} strokeWidth={1.5} /></button>
          <button aria-label="Restore" className="flex w-[69px] justify-center"><Copy size={16} strokeWidth={1.5} className="-scale-x-100" /></button>
          <button aria-label="Close" className="flex w-[71px] justify-center"><X size={20} strokeWidth={1.5} /></button>
        </div>
      </header>
      <nav className="flex h-[37px] shrink-0 items-center bg-[#f3f3f3] pb-[2px] pl-[5px] text-[18px]">
        {menu.map((item) => (
          <button key={item} className="px-[15px]">{item}</button>
        ))}
      </nav>
      <Toolbars />
      <main className="flex min-h-0 flex-1">
        <SideTabs />
        <Library />
        <Workspace />
        <Inspector />
      </main>
      <footer className="flex h-[38px] shrink-0 items-center border-t border-[#d5d5d5] pl-[5px] text-[19px]">Progress:</footer>
      <ObjectDialog />
      <Annotations />
    </div>
  );
}
